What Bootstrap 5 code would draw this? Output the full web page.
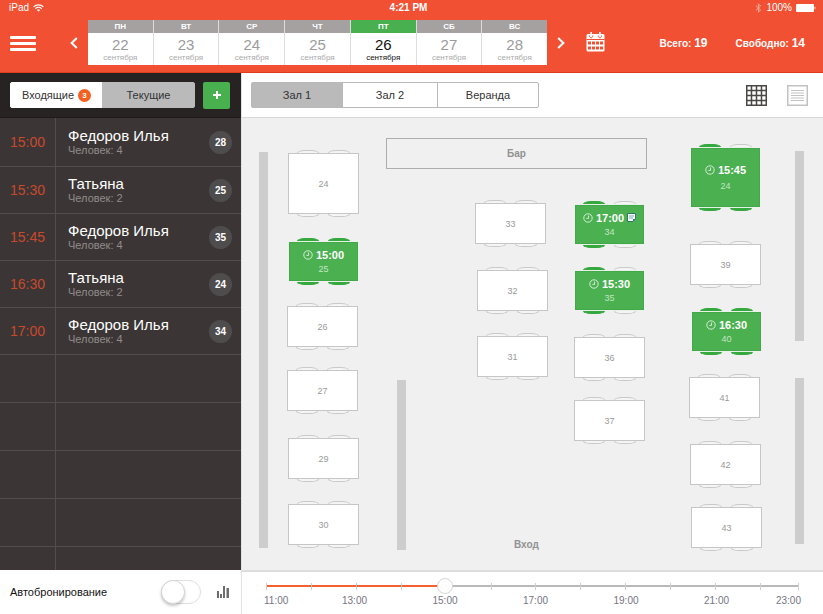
<!DOCTYPE html>
<html lang="ru">
<head>
<meta charset="utf-8">
<meta name="viewport" content="width=device-width, initial-scale=1">
<title>Бронирование столов</title>
<link href="https://cdn.jsdelivr.net/npm/bootstrap@5.3.0/dist/css/bootstrap.min.css" rel="stylesheet">
<style>
body { font-family: "Liberation Sans", Arial, sans-serif; font-size: 11px; line-height: 14px; color: #222; background: #fff; }
button { font: inherit; }
svg { display: block; flex: none; }
.top-bar { background: #f15033; border-bottom: 1px solid #e23c1c; color: #fff; }
.status-bar { display: grid; grid-template-columns: 1fr auto 1fr; height: 16px; padding: 0 7px 0 9px; align-items: center; }
.status-bar .clock-now { font-weight: bold; font-size: 10px; margin-right: 8px; }
.status-text { font-size: 10px; }
.main-nav { height: 56px; padding: 4px 18px 7px 10px; }
.plain-btn { background: none; border: 0; padding: 0; color: inherit; }
.nav-prev { margin-left: 34px; margin-right: 10px; }
.nav-next { margin-left: 10px; margin-right: 21px; }
.days { flex: 0 1 459px; }
.day { flex: 1 1 0; display: flex; flex-direction: column; align-items: stretch; border: 0; border-right: 1px solid #dcdcdc; background: #fff; color: #9b9b9b; padding: 0; height: 45px; text-align: center; }
.day:last-child { border-right: 0; }
.day-name { height: 13px; line-height: 14px; font-size: 8px; font-weight: bold; color: #fff; background: #a5a1a1; }
.day-num { font-size: 15px; line-height: 18px; margin-top: 3px; }
.day-month { font-size: 8px; line-height: 8px; color: #aaa; }
.day.is-on, .day.is-on .day-month { color: #111; }
.day.is-on .day-name { background: #48b04f; }
.totals { gap: 28px; font-size: 10px; font-weight: bold; white-space: nowrap; }
.totals strong { font-size: 12px; }

.side { flex: 0 0 242px; background: #3b3635; border-right: 1px solid #e2e2e2; }
.side-tools { background: #272322; height: 45px; padding: 0 11px 0 10px; gap: 8px; border-bottom: 1px solid #1d1a19; }
.seg .btn { font-size: 11px; line-height: 14px; padding: 5px 4px; border-radius: 2px; color: #333; border: 1px solid #b9b9b9; background: #fff; white-space: nowrap; }
.seg .btn.is-on { background: #bababa; }
.side .seg .btn { border-color: #fff; }
.side .seg .btn.is-on { border-color: #bababa; }
.seg-side { width: 185px; }
.seg-side .btn { flex: 1 1 0; }
.count-pill { width: 13px; height: 13px; border-radius: 50%; background: #f4601f; color: #fff; font-size: 8px; font-weight: bold; line-height: 13px; text-align: center; }
.add-btn { width: 27px; height: 27px; border-radius: 2px; background: #48b04f; color: #fff; border: 0; }
.bookings { flex: 1 1 0; min-height: 450px; overflow: hidden; }
.booking { height: 47px; border-bottom: 1px solid #524e4d; color: #fff; flex: none; }
.booking:first-child { height: 49px; }
.booking.is-empty { height: 48px; }
.booking-time { width: 56px; border-right: 1px solid #524e4d; padding-left: 10px; font-size: 14px; color: #c9492d; flex: none; }
.guest { font-size: 15px; line-height: 16px; }
.party { font-size: 11px; line-height: 12px; color: #908c8b; }
.table-no { width: 23px; height: 23px; border-radius: 50%; background: #4f4c4d; font-size: 10px; font-weight: bold; line-height: 23px; text-align: center; margin-right: 9px; }
.foot { height: 44px; }
.auto-label { font-size: 11px; color: #111; padding-left: 10px; }
.auto-switch.form-check-input { width: 40px; height: 24px; margin: 0; border: 1px solid #dedede; border-radius: 12px; background: #fff; position: relative; float: none; }
.auto-switch.form-check-input::before { content: ""; display: block; width: 24px; height: 24px; margin: -1px; border-radius: 50%; border: 1px solid #d5d5d5; background: #fff; box-shadow: 0 2px 3px rgba(0,0,0,.22); }
.auto-switch.form-check-input:checked { background: #48b04f; }
.auto-switch.form-check-input:checked::before { margin-left: 15px; }

.hall-tools { height: 45px; padding: 0 15px 0 9px; border-bottom: 1px solid #d8d8d8; }
.seg-halls .btn:nth-child(1) { width: 92px; }
.seg-halls .btn:nth-child(2) { width: 96px; }
.seg-halls .btn:nth-child(3) { width: 102px; }
.plan { position: relative; flex: 1 1 auto; min-height: 452px; background: #f0f0f0; overflow: hidden; }
.wall, .bar-zone, .entry, .tbl { position: absolute; }
.wall { width: 9px; background: #cdcdcd; }
.bar-zone { left: 144px; top: 20px; width: 261px; height: 31px; border: 1px solid #adadad; color: #929292; font-size: 10px; font-weight: bold; line-height: 29px; text-align: center; }
.entry { left: 272px; top: 420px; font-size: 10px; font-weight: bold; color: #929292; }
.tbl { width: 71px; height: 41px; padding: 0; background: #fff; border: 1px solid #c6c6c6; font-size: 9px; line-height: 12px; color: #999; }
.tbl.tall { height: 61px; }
.tbl.busy { width: 69px; height: 39px; background: #4ab050; border-color: #42a948; color: #c4e6c5; }
.tbl.busy.tall { height: 59px; }
.tbl.busy.tall .when { margin-bottom: 4px; }
.when { display: flex; align-items: center; justify-content: center; gap: 3px; color: #fff; font-size: 11px; font-weight: bold; line-height: 12px; margin-bottom: 2px; }
.seat { position: absolute; width: 22px; height: 3px; border: 1px solid #c9c9c9; background: #f5f5f5; }
.seat:nth-of-type(1), .seat:nth-of-type(2) { top: -4px; border-bottom: 0; border-radius: 8px 8px 0 0 / 3px 3px 0 0; }
.seat:nth-of-type(3), .seat:nth-of-type(4) { bottom: -4px; border-top: 0; border-radius: 0 0 8px 8px / 0 0 3px 3px; }
.seat:nth-of-type(odd) { left: 8px; }
.seat:nth-of-type(even) { left: 39px; }
.busy .seat:nth-of-type(odd) { left: 7px; }
.busy .seat:nth-of-type(even) { left: 38px; }
.seat.taken { background: #35a93e; border-color: #35a93e; }
.busy .seat:nth-of-type(-n+2) { box-shadow: 0 1px 0 #e4f1e4; top: -5px; }
.busy .seat:nth-of-type(n+3) { box-shadow: 0 -1px 0 #e4f1e4; bottom: -5px; }
#w1 { left: 17px; top: 34px; height: 396px; }
#w2 { left: 155px; top: 262px; height: 170px; }
#w3 { left: 553px; top: 33px; height: 190px; }
#w4 { left: 553px; top: 260px; height: 166px; }
#t24 { left: 46px; top: 35px; }
#t25 { left: 47px; top: 124px; }
#t26 { left: 45px; top: 188px; }
#t27 { left: 45px; top: 252px; }
#t29 { left: 46px; top: 320px; }
#t30 { left: 46px; top: 386px; }
#t33 { left: 233px; top: 85px; }
#t32 { left: 235px; top: 152px; }
#t31 { left: 235px; top: 218px; }
#t34 { left: 333px; top: 87px; }
#t35 { left: 333px; top: 153px; }
#t36 { left: 332px; top: 219px; }
#t37 { left: 332px; top: 282px; }
#t38 { left: 449px; top: 30px; }
#t39 { left: 448px; top: 126px; }
#t40 { left: 450px; top: 194px; }
#t41 { left: 447px; top: 259px; }
#t42 { left: 448px; top: 326px; }
#t43 { left: 449px; top: 389px; }

.time-bar { padding: 11px 24px 0 24px; border-top: 2px solid #dedede; }
.time-track { position: relative; }
.time-line { height: 2px; background: linear-gradient(to right, #f4602f 34%, #b9b9b9 34%); }
.ticks { display: grid; grid-template-columns: repeat(11, 45fr) 39fr; height: 7px; margin-bottom: -5px; }
.ticks span { border-left: 1px solid #cfcfcf; }
.ticks span:last-child { border-right: 1px solid #cfcfcf; }
.time-range { position: absolute; left: -8px; top: -5px; width: calc(100% + 16px); height: 16px; margin: 0; appearance: none; background: none; }
.time-range::-webkit-slider-thumb { appearance: none; width: 16px; height: 16px; border-radius: 50%; background: #fff; border: 1px solid #d5d5d5; }
.time-labels { display: grid; grid-template-columns: 45fr repeat(5, 90fr) 39fr; margin: 7px -2px 0; font-size: 10px; line-height: 14px; color: #757582; text-align: center; }
.time-labels span:first-child { text-align: left; }
.time-labels span:last-child { justify-self: end; }
</style>
<script src="https://cdn.jsdelivr.net/npm/bootstrap@5.3.0/dist/js/bootstrap.bundle.min.js"></script>
</head>
<body class="d-flex flex-column min-vh-100">
<svg width="0" height="0" class="position-absolute" aria-hidden="true">
  <symbol id="clock" viewBox="0 0 10 10"><circle cx="5" cy="5" r="4.2" fill="none" stroke="#d5eed6" stroke-width="1"/><path d="M5.600 2.500V5.400H3.400" fill="none" stroke="#d5eed6" stroke-width="1"/></symbol>
</svg>

<header class="top-bar">
  <div class="status-bar">
    <div class="d-flex align-items-center gap-1 status-text"><span>iPad</span>
      <svg width="11" height="8" viewBox="0 0 11 8" fill="none" stroke="#fff" stroke-width="1.2"><path d="M.6 2.9a7 7 0 0 1 9.8 0M2.3 4.7a4.6 4.6 0 0 1 6.4 0"/><path d="M3.9 6.1a2.3 2.3 0 0 1 3.2 0L5.5 7.8z" fill="#fff" stroke="none"/></svg>
    </div>
    <span class="clock-now">4:21 PM</span>
    <div class="d-flex align-items-center justify-content-end gap-1 status-text">
      <svg width="7" height="10" viewBox="0 0 7 10" fill="none" stroke="#f9b3a4" stroke-width=".9"><path d="M1 2.7 5.6 7 3.4 9.2V.8L5.6 3 1 7.3"/></svg>
      <span>100%</span>
      <svg width="20" height="8" viewBox="0 0 20 8"><rect width="18" height="8" rx="1" fill="#fff"/><path d="M18.6 2.6c1.2.3 1.2 2.5 0 2.8z" fill="#fff"/></svg>
    </div>
  </div>
  <nav class="main-nav d-flex align-items-start" aria-label="Основная">
    <button class="plain-btn mt-3" type="button" aria-label="Меню"><svg width="26" height="15" viewBox="0 0 26 15" fill="#fff"><rect width="26" height="3" rx="1"/><rect y="6" width="26" height="3" rx="1"/><rect y="12" width="26" height="3" rx="1"/></svg></button>
    <button class="plain-btn nav-prev mt-3" type="button" aria-label="Раньше"><svg width="8" height="14" viewBox="0 0 8 14" fill="none" stroke="#fff" stroke-width="2"><path d="M6.800 2 1.600 7l5.200 5"/></svg></button>
    <div class="days d-flex">
      <button class="day" type="button"><span class="day-name">ПН</span><span class="day-num">22</span><span class="day-month">сентября</span></button>
      <button class="day" type="button"><span class="day-name">ВТ</span><span class="day-num">23</span><span class="day-month">сентября</span></button>
      <button class="day" type="button"><span class="day-name">СР</span><span class="day-num">24</span><span class="day-month">сентября</span></button>
      <button class="day" type="button"><span class="day-name">ЧТ</span><span class="day-num">25</span><span class="day-month">сентября</span></button>
      <button class="day is-on" type="button"><span class="day-name">ПТ</span><span class="day-num">26</span><span class="day-month">сентября</span></button>
      <button class="day" type="button"><span class="day-name">СБ</span><span class="day-num">27</span><span class="day-month">сентября</span></button>
      <button class="day" type="button"><span class="day-name">ВС</span><span class="day-num">28</span><span class="day-month">сентября</span></button>
    </div>
    <button class="plain-btn nav-next mt-3" type="button" aria-label="Позже"><svg width="8" height="14" viewBox="0 0 8 14" fill="none" stroke="#fff" stroke-width="2"><path d="M1.200 2l5.200 5-5.200 5"/></svg></button>
    <button class="plain-btn mt-2 pt-1" type="button" aria-label="Календарь"><svg width="19" height="20" viewBox="0 0 19 20"><path d="M2 2h15a1.5 1.5 0 0 1 1.500 1.500V18a1.500 1.500 0 0 1-1.500 1.500H2A1.500 1.500 0 0 1 .5 18V3.500A1.500 1.500 0 0 1 2 2z" fill="#fff"/><path d="M.5 7.500h18" stroke="#f15033" stroke-width="1"/><path d="M3.400 3.500c0 3 3.400 3 3.400 0M12.200 3.500c0 3 3.400 3 3.400 0" fill="none" stroke="#f15033"/><path d="M5.100.5v3M13.900.5v3" stroke="#fff" stroke-width="1.600" stroke-linecap="round"/><path d="M2 9.500h3v3H2zM6 9.500h3v3H6zM10 9.500h3v3h-3zM14 9.500h3v3h-3zM2 14.500h3v3H2zM6 14.500h3v3H6zM10 14.500h3v3h-3zM14 14.500h3v3h-3z" fill="#f15033"/></svg></button>
    <div class="totals d-flex ms-auto mt-3"><span>Всего: <strong>19</strong></span><span>Свободно: <strong>14</strong></span></div>
  </nav>
</header>

<div class="d-flex flex-grow-1">
  <aside class="side d-flex flex-column">
    <div class="side-tools d-flex align-items-center">
      <div class="btn-group seg seg-side">
        <button class="btn d-flex align-items-center justify-content-center gap-1" type="button">Входящие <span class="count-pill">3</span></button>
        <button class="btn is-on" type="button">Текущие</button>
      </div>
      <button class="add-btn p-0 d-flex align-items-center justify-content-center" type="button" aria-label="Добавить"><svg width="8" height="8" viewBox="0 0 8 8"><path d="M4 0v8M0 4h8" stroke="#fff" stroke-width="2"/></svg></button>
    </div>
    <div class="bookings d-flex flex-column">
      <div class="booking d-flex"><div class="booking-time d-flex align-items-center">15:00</div><div class="d-flex flex-grow-1 align-items-center justify-content-between ps-2"><div class="ps-1"><div class="guest">Федоров Илья</div><div class="party">Человек: 4</div></div><span class="table-no">28</span></div></div>
      <div class="booking d-flex"><div class="booking-time d-flex align-items-center">15:30</div><div class="d-flex flex-grow-1 align-items-center justify-content-between ps-2"><div class="ps-1"><div class="guest">Татьяна</div><div class="party">Человек: 2</div></div><span class="table-no">25</span></div></div>
      <div class="booking d-flex"><div class="booking-time d-flex align-items-center">15:45</div><div class="d-flex flex-grow-1 align-items-center justify-content-between ps-2"><div class="ps-1"><div class="guest">Федоров Илья</div><div class="party">Человек: 4</div></div><span class="table-no">35</span></div></div>
      <div class="booking d-flex"><div class="booking-time d-flex align-items-center">16:30</div><div class="d-flex flex-grow-1 align-items-center justify-content-between ps-2"><div class="ps-1"><div class="guest">Татьяна</div><div class="party">Человек: 2</div></div><span class="table-no">24</span></div></div>
      <div class="booking d-flex"><div class="booking-time d-flex align-items-center">17:00</div><div class="d-flex flex-grow-1 align-items-center justify-content-between ps-2"><div class="ps-1"><div class="guest">Федоров Илья</div><div class="party">Человек: 4</div></div><span class="table-no">34</span></div></div>
      <div class="booking is-empty d-flex"><div class="booking-time"></div></div>
      <div class="booking is-empty d-flex"><div class="booking-time"></div></div>
      <div class="booking is-empty d-flex"><div class="booking-time"></div></div>
      <div class="booking is-empty d-flex"><div class="booking-time"></div></div>
      <div class="booking is-empty d-flex"><div class="booking-time"></div></div>
    </div>
    <div class="foot bg-white d-flex align-items-center">
      <label class="auto-label flex-grow-1" for="auto">Автобронирование</label>
      <input class="auto-switch form-check-input" type="checkbox" role="switch" id="auto">
      <button class="plain-btn ms-3 me-2 pe-1" type="button" aria-label="Статистика"><svg width="12" height="12" viewBox="0 0 12 12" fill="#6d6d6d"><rect y="5" width="2" height="7"/><rect x="3" y="8" width="2" height="4"/><rect x="6" y="0" width="2" height="12"/><rect x="9.500" y="2" width="2.500" height="10"/></svg></button>
    </div>
  </aside>

  <main class="flex-grow-1 d-flex flex-column">
    <div class="hall-tools d-flex align-items-center">
      <div class="btn-group seg seg-halls">
        <button class="btn is-on" type="button">Зал 1</button>
        <button class="btn" type="button">Зал 2</button>
        <button class="btn" type="button">Веранда</button>
      </div>
      <button class="plain-btn ms-auto" type="button" aria-label="План"><svg width="21" height="21" viewBox="0 0 21 21" fill="none" stroke="#4a4643"><rect x=".75" y=".75" width="19.500" height="19.500" stroke-width="1.500"/><path d="M5.500 0v21M10.500 0v21M15.500 0v21M0 5.500h21M0 10.500h21M0 15.500h21" stroke-width="1.500"/></svg></button>
      <button class="plain-btn ms-3 ps-1" type="button" aria-label="Список"><svg width="21" height="21" viewBox="0 0 21 21" fill="none" stroke="#c2c2c2"><rect x=".75" y=".75" width="19.500" height="19.500" stroke-width="1.500"/><path d="M4 5.500h13M4 8h13M4 10.500h13M4 13h13M4 15.500h13"/></svg></button>
    </div>
    <div class="plan">
      <div class="wall" id="w1"></div><div class="wall" id="w2"></div><div class="wall" id="w3"></div><div class="wall" id="w4"></div>
      <div class="bar-zone">Бар</div>
      <div class="entry">Вход</div>
      <button class="tbl tall" id="t24" type="button"><i class="seat"></i><i class="seat"></i><i class="seat"></i><i class="seat"></i>24</button>
      <button class="tbl busy" id="t25" type="button"><i class="seat taken"></i><i class="seat taken"></i><i class="seat taken"></i><i class="seat taken"></i><span class="when"><svg width="10" height="10"><use href="#clock"/></svg>15:00</span>25</button>
      <button class="tbl" id="t26" type="button"><i class="seat"></i><i class="seat"></i><i class="seat"></i><i class="seat"></i>26</button>
      <button class="tbl" id="t27" type="button"><i class="seat"></i><i class="seat"></i><i class="seat"></i><i class="seat"></i>27</button>
      <button class="tbl" id="t29" type="button"><i class="seat"></i><i class="seat"></i><i class="seat"></i><i class="seat"></i>29</button>
      <button class="tbl" id="t30" type="button"><i class="seat"></i><i class="seat"></i><i class="seat"></i><i class="seat"></i>30</button>
      <button class="tbl" id="t33" type="button"><i class="seat"></i><i class="seat"></i><i class="seat"></i><i class="seat"></i>33</button>
      <button class="tbl" id="t32" type="button"><i class="seat"></i><i class="seat"></i><i class="seat"></i><i class="seat"></i>32</button>
      <button class="tbl" id="t31" type="button"><i class="seat"></i><i class="seat"></i><i class="seat"></i><i class="seat"></i>31</button>
      <button class="tbl busy" id="t34" type="button"><i class="seat taken"></i><i class="seat"></i><i class="seat taken"></i><i class="seat"></i><span class="when"><svg width="10" height="10"><use href="#clock"/></svg>17:00<svg width="9" height="9" viewBox="0 0 9 9"><path d="M.5.500h8v5.500L6 8.500H.5z" fill="#fff" stroke="#2c7a6c"/><path d="M2 3h5M2 5h4" stroke="#4b8fa0" stroke-width=".8"/><path d="M8.500 6H6v2.500z" fill="#2c7a6c"/></svg></span>34</button>
      <button class="tbl busy" id="t35" type="button"><i class="seat taken"></i><i class="seat"></i><i class="seat taken"></i><i class="seat"></i><span class="when"><svg width="10" height="10"><use href="#clock"/></svg>15:30</span>35</button>
      <button class="tbl" id="t36" type="button"><i class="seat"></i><i class="seat"></i><i class="seat"></i><i class="seat"></i>36</button>
      <button class="tbl" id="t37" type="button"><i class="seat"></i><i class="seat"></i><i class="seat"></i><i class="seat"></i>37</button>
      <button class="tbl busy tall" id="t38" type="button"><i class="seat taken"></i><i class="seat"></i><i class="seat taken"></i><i class="seat taken"></i><span class="when"><svg width="10" height="10"><use href="#clock"/></svg>15:45</span>24</button>
      <button class="tbl" id="t39" type="button"><i class="seat"></i><i class="seat"></i><i class="seat"></i><i class="seat"></i>39</button>
      <button class="tbl busy" id="t40" type="button"><i class="seat taken"></i><i class="seat taken"></i><i class="seat taken"></i><i class="seat taken"></i><span class="when"><svg width="10" height="10"><use href="#clock"/></svg>16:30</span>40</button>
      <button class="tbl" id="t41" type="button"><i class="seat"></i><i class="seat"></i><i class="seat"></i><i class="seat"></i>41</button>
      <button class="tbl" id="t42" type="button"><i class="seat"></i><i class="seat"></i><i class="seat"></i><i class="seat"></i>42</button>
      <button class="tbl" id="t43" type="button"><i class="seat"></i><i class="seat"></i><i class="seat"></i><i class="seat"></i>43</button>
    </div>
    <div class="foot time-bar">
      <div class="time-track">
        <div class="ticks"><span></span><span></span><span></span><span></span><span></span><span></span><span></span><span></span><span></span><span></span><span></span><span></span></div>
        <div class="time-line"></div>
        <input class="time-range" type="range" min="11" max="23" step="0.04" value="15.04" aria-label="Время">
      </div>
      <div class="time-labels"><span>11:00</span><span>13:00</span><span>15:00</span><span>17:00</span><span>19:00</span><span>21:00</span><span>23:00</span></div>
    </div>
  </main>
</div>
</body>
</html>
